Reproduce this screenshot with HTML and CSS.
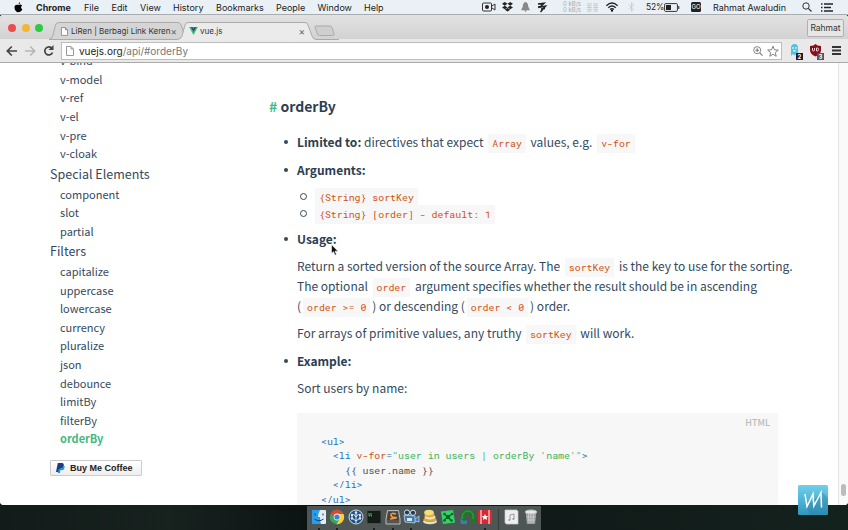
FILE: index.html
```
<!DOCTYPE html>
<html lang="en">
<head>
<meta charset="utf-8">
<title>vue.js</title>
<link rel="stylesheet" href="styles.css">
</head>
<body>
<div class="desktop">
  <header class="menubar">
    <svg class="apple" viewBox="0 0 10 12"><path d="M6.900 0Q7 1.800 5 2.600Q4.900.8 6.900 0M5 3.300Q7.700 2 9 4Q6.500 5.800 9.300 8Q7.600 12 5.300 10.900Q2.800 12 1.200 8.900Q-.7 3.600 3 3Q4 2.900 5 3.300"/></svg>
    <b class="m-chrome">Chrome</b><span class="m-file">File</span><span class="m-edit">Edit</span><span class="m-view">View</span><span class="m-history">History</span><span class="m-bookmarks">Bookmarks</span><span class="m-people">People</span><span class="m-window">Window</span><span class="m-help">Help</span>
    <div class="status">
      <svg class="cam" viewBox="0 0 14 10"><rect x=".5" y="1" width="9" height="8" rx="1" fill="none" stroke="#333"/><circle cx="5" cy="5" r="2" fill="#222"/><path d="M10 4l3-2v6l-3-2" fill="none" stroke="#333"/></svg>
      <svg class="drop" viewBox="0 0 12 11"><path d="M3 0l3 2-3 2-3-2zM9 0l3 2-3 2-3-2zM3 4l3 2-3 2-3-2zM9 4l3 2-3 2-3-2zM3 8.500l3-2 3 2-3 2z" fill="#222"/></svg>
      <svg class="bell" viewBox="0 0 10 11"><path d="M5 0q3 1 3 5l2 4H0l2-4q0-4 3-5M3.500 9.500h3L5 11" fill="#888"/></svg>
      <svg class="zz" viewBox="0 0 10 11"><path d="M1 2l6-.8-4 4 5.500-1-5 5.800M1 5l3-.5M4 7l4-.4" fill="none" stroke="#222" stroke-width="1.500"/></svg>
      <span class="net">0 kB/s<br>0 kB/s</span>
      <svg class="bars" viewBox="0 0 12 10"><path d="M0 1h5M0 3h5M0 5h5M0 7h5M0 9h5M7 1h5M7 3h5M7 5h5M7 7h5M7 9h5" stroke="#bfc4c8"/></svg>
      <svg class="wifi" viewBox="0 0 14 11"><path d="M.8 4Q7-1.800 13.200 4M2.900 6.200Q7 2.500 11.100 6.200M4.900 8.300Q7 6.500 9.100 8.300" fill="none" stroke="#222" stroke-width="1.500"/><circle cx="7" cy="9.600" r="1.200"/></svg>
      <svg class="bt" viewBox="0 0 8 11"><path d="M1 3l5.500 5L4 10.500V.5L6.500 3 1 8" fill="none" stroke="#c5cacd"/></svg>
      <span class="pct">52%</span>
      <svg class="batt" viewBox="0 0 16 9"><rect x=".6" y=".6" width="12.800" height="7.800" rx="1" fill="none" stroke="#333"/><path d="M2 2h5v5H2zM14.300 3h1v3h-1z" fill="#222"/></svg>
      <span class="go">GO</span>
      <span class="user">Rahmat Awaludin</span>
      <svg class="search" viewBox="0 0 10 10"><circle cx="4" cy="4" r="3.200" fill="none" stroke="#333"/><path d="M6.300 6.300L9.500 9.500" stroke="#333" stroke-width="1.200"/></svg>
      <svg class="list" viewBox="0 0 12 9"><path d="M0 1h1.500M0 4.500h1.500M0 8h1.500M3 1h9M3 4.500h7M3 8h9" stroke="#222" stroke-width="1.300"/></svg>
    </div>
  </header>
  <main class="window">
    <div class="tabstrip">
      <div class="lights"><i class="red"></i><i class="amber"></i><i class="green"></i></div>
      <svg class="tabshape" viewBox="0 0 290 18" aria-hidden="true">
        <path d="M0 17.500Q3 17 4 13L6.500 3Q7.200.5 10 .5H129Q131 .5 132 3L136 14" fill="#d5d5d5" stroke="#aaa"/>
        <path d="M0 17.500H128Q132 17.500 133 14L136 3Q136.800.5 139 .5H256Q258 .5 259 3L263 14Q264 17.500 267 17.500H290V18H0z" fill="#ebebeb"/>
        <path d="M0 17.500H128Q132 17.500 133 14L136 3Q136.800.5 139 .5H256Q258 .5 259 3L263 14Q264 17.500 267 17.500H290" fill="none" stroke="#aaa"/>
        <path d="M267 4h14q1.500 0 2 1.500l2 6q.6 2-1.500 2h-13q-1.500 0-2-1.500l-2.500-6.500q-.5-1.500 1-1.500z" fill="#cfcfcf" stroke="#aaa"/>
      </svg>
      <div class="tabs">
        <div class="tab one"><svg viewBox="0 0 8 10"><path d="M.5.5h4.500l2.500 2.500v6.500h-7zM5 .5V3h2.500" fill="#fff" stroke="#888"/></svg><span>LiRen | Berbagi Link Keren</span><em>×</em></div>
        <div class="tab two"><svg viewBox="0 0 10 9"><path d="M0 0h10L5 9z" fill="#41b883"/><path d="M2 0h1.800L5 2l1.200-2H8L5 5.400z" fill="#35495e"/></svg><span>vue.js</span><em>×</em></div>
      </div>
      <span class="profile">Rahmat</span>
    </div>
    <div class="toolbar">
      <svg class="nav" viewBox="0 0 52 12"><path d="M11 6H1.500M5.800 1.500L1.300 6l4.500 4.500" fill="none" stroke="#444" stroke-width="1.700"/><path d="M19 6h9.500M24.200 1.500L28.700 6l-4.500 4.500" fill="none" stroke="#b5b5b5" stroke-width="1.500"/><path d="M45.500 3A4 4 0 1 0 46.500 7.500" fill="none" stroke="#444" stroke-width="1.700"/><path d="M47.500 0v5h-5z" fill="#444"/></svg>
      <div class="address">
        <svg class="doc" viewBox="0 0 8 10"><path d="M.5.5h4.500l2.500 2.500v6.500h-7zM5 .5V3h2.500" fill="#fff" stroke="#999"/></svg>
        <span class="url"><b>vuejs.org</b>/api/#orderBy</span>
        <svg class="mag" viewBox="0 0 11 11"><circle cx="4.600" cy="4.600" r="3.900" fill="none" stroke="#777"/><path d="M2.600 4.600h4M4.600 2.600v4M7.500 7.500l3 3" stroke="#777" stroke-width="1.200"/></svg>
        <svg class="star" viewBox="0 0 13 12"><path d="M6.500.8l1.600 3.900 4.200.3L9 7.700l1 4-3.500-2.200L3 11.700l1-4L.7 5l4.200-.3z" fill="#fff" stroke="#777"/></svg>
      </div>
      <div class="ext ghost"><svg viewBox="0 0 12 13"><path d="M2 12V4q0-4 3.500-4T9 4v7l-2-1-1.500 1.500L4 10z" fill="#4fc3dc"/><path d="M4 3v2M7 3v2M4 6.800h3" stroke="#fff"/></svg><small>2</small></div>
      <div class="ext shield"><svg viewBox="0 0 12 13"><path d="M0 2q4 0 5.500-2Q7 2 11 2v4q0 4-5.500 6.500Q0 10 0 6z" fill="#8c0c18"/><path d="M2.500 4v2q0 1 1 1t1-1V4M6.500 4v3h.8q1.200 0 1.200-1.500T7.300 4z" fill="none" stroke="#fff" stroke-width=".8"/></svg><small>3</small></div>
      <svg class="burger" viewBox="0 0 9 9"><path d="M0 1h9M0 4.500h9M0 8h9" stroke="#333" stroke-width="2"/></svg>
    </div>
    <div class="page">
      <nav class="sidebar">
        <ul>
          <li>v-bind</li><li>v-model</li><li>v-ref</li><li>v-el</li><li>v-pre</li><li>v-cloak</li>
        </ul>
        <h4>Special Elements</h4>
        <ul><li>component</li><li>slot</li><li>partial</li></ul>
        <h4>Filters</h4>
        <ul><li>capitalize</li><li>uppercase</li><li>lowercase</li><li>currency</li><li>pluralize</li><li>json</li><li>debounce</li><li>limitBy</li><li>filterBy</li><li class="current">orderBy</li></ul>
        <div class="coffee"><svg viewBox="0 0 10 11"><path d="M2 0h4.500q3 .5 2 3.500T5 6.200L4 6.500 3.300 10H0z" fill="#1b3d80"/><path d="M8.800 2.500q1.500 1.500.3 3.800T5 7.800L4.400 11H2l1-4.500 2.500-.3Q8.500 5.500 8.800 2.500" fill="#179bd7"/></svg><span>Buy Me Coffee</span></div>
      </nav>
      <article class="content">
        <h3><a>#</a> orderBy</h3>
        <ul class="facts">
          <li><p><b>Limited to:</b> directives that expect <code>Array</code> values, e.g. <code>v-for</code></p></li>
          <li><p><b>Arguments:</b></p>
            <ul class="args"><li><code>{String} sortKey</code></li><li><code>{String} [order] - default: 1</code></li></ul>
          </li>
          <li><p><b>Usage:</b></p>
            <p>Return a sorted version of the source Array. The <code>sortKey</code> is the key to use for the sorting.<br>The optional <code>order</code> argument specifies whether the result should be in ascending<br>(<code>order &gt;= 0</code>) or descending (<code>order &lt; 0</code>) order.</p>
            <p>For arrays of primitive values, any truthy <code>sortKey</code> will work.</p>
          </li>
          <li><p><b>Example:</b></p>
            <p>Sort users by name:</p>
            <div class="sample"><span class="lang">HTML</span><pre><i>&lt;ul&gt;</i>
  <i>&lt;li <u>v-for</u>=<s>"user in users | orderBy 'name'"</s>&gt;</i>
    {{ user.name }}
  <i>&lt;/li&gt;</i>
<i>&lt;/ul&gt;</i></pre></div>
          </li>
        </ul>
      </article>
      <div class="scrollbar"><i></i></div>
    </div>
  </main>
  <svg class="pointer" viewBox="0 0 8 12"><path d="M.5.5v9l2-1.800 1.500 3.500 1.500-.7L4 7.200h3z" fill="#111" stroke="#fff" stroke-width=".6"/></svg>
  <svg class="watermark" viewBox="0 0 30 30"><defs><linearGradient id="sky" x2="0" y2="1"><stop stop-color="#6fd0ec"/><stop offset="1" stop-color="#2f97bd"/></linearGradient></defs><rect width="30" height="30" rx="1.500" fill="url(#sky)"/><path d="M24 7l6 6v17H12L8 22z" fill="#27789a" opacity=".35"/><path d="M7 9l2 12.500L15 9l.8 12L23 7.500l.5 15" fill="none" stroke="#fff" stroke-width="1.500"/></svg>
  <footer class="dock">
    <div class="app on"><svg viewBox="0 0 16 16"><rect x="1" y="1" width="14" height="14" rx="1" fill="#e1edf7"/><path d="M1 1h8q-2 4-2 7h2q0 4 1 7H1z" fill="#2a9cec"/><path d="M4 4.500v2M12 4.500v2M3.500 10q4.500 3.500 9 0" fill="none" stroke="#173c64"/></svg></div>
    <div class="app on"><svg viewBox="0 0 16 16"><circle cx="8" cy="8" r="7.200" fill="#36a852"/><path d="M1.800 4.400A7.200 7.200 0 0 1 14.500 5H8L5 9z" fill="#df4537"/><path d="M14.500 5A7.200 7.200 0 0 1 7.500 15.200L11 9.500 8 5z" fill="#f9cf35"/><circle cx="8" cy="8" r="3.400" fill="#eee"/><circle cx="8" cy="8" r="2.600" fill="#3d7fd8"/></svg></div>
    <div class="app"><svg viewBox="0 0 16 16"><circle cx="8" cy="8" r="7" fill="#1e4f87" stroke="#d6dde7"/><path d="M8 14V3M8 12L4 9V6M8 12l4-3V6M8 8L5.500 5M8 8l2.500-3" fill="none" stroke="#dbe9f5"/><g fill="#dbe9f5"><circle cx="8" cy="3.500" r="1.300"/><circle cx="4" cy="6" r="1.200"/><circle cx="12" cy="6" r="1.200"/><circle cx="4" cy="9.500" r="1.200"/><circle cx="12" cy="9.500" r="1.200"/></g></svg></div>
    <div class="app on"><svg viewBox="0 0 16 16"><rect x="1" y="1.500" width="14" height="13" rx="1" fill="#151c18" stroke="#47504b"/><path d="M3 4v3M5 4v3M3 7h1M5 7h1" stroke="#36c953"/></svg></div>
    <div class="app on"><svg viewBox="0 0 16 16"><path d="M2.500 1.500h11L15 10v5H1v-5z" fill="#555" stroke="#bbb"/><path d="M3.500 3h9l1 8h-11z" fill="#414141"/><path d="M11 5Q6 3.500 6 6t4 2.500T5 10" fill="none" stroke="#f29a3a" stroke-width="1.700"/></svg></div>
    <div class="app on"><svg viewBox="0 0 16 16"><path d="M1 6l11 1v7l-10-1zM12 10l4-3v6l-4-1" fill="#3e79b4" stroke="#c0d3e3" stroke-width=".8"/><circle cx="4" cy="3.500" r="2.600" fill="#263b50" stroke="#d7e2ec"/><circle cx="10" cy="3.800" r="2.600" fill="#263b50" stroke="#d7e2ec"/><path d="M4 9h5v3H4z" fill="#d7e7f2"/></svg></div>
    <div class="app"><svg viewBox="0 0 16 16"><ellipse cx="8" cy="12.500" rx="7" ry="2.800" fill="#e5e2d5"/><ellipse cx="8" cy="10.500" rx="6.500" ry="2.800" fill="#d7a733"/><ellipse cx="8" cy="8" rx="5.500" ry="2.500" fill="#ece7cd"/><ellipse cx="7.500" cy="6" rx="5" ry="2.400" fill="#deb03b"/><ellipse cx="7" cy="3.500" rx="4.800" ry="2.800" fill="#f4dc7c"/></svg></div>
    <div class="app"><svg viewBox="0 0 16 16"><path d="M1 2.500L13 1l2 12.500L3 15z" fill="#34d464"/><path d="M8 8L4 5M8 8l4-3M8 8l3.500 4M8 8l-4 3" stroke="#0d622e" stroke-width="1.300"/><g fill="#0d622e"><circle cx="8" cy="8" r="2.200"/><circle cx="4.500" cy="5" r="1.300"/><circle cx="12" cy="5" r="1.300"/><circle cx="11.500" cy="11.500" r="1.300"/><circle cx="4.500" cy="11.500" r="1.300"/></g></svg></div>
    <div class="app"><svg viewBox="0 0 16 16"><path d="M4 13V8q0-6 5-6t5 6v6" fill="none" stroke="#197d26" stroke-width="4"/><path d="M3 10q0-8 6-8t5 8" fill="none" stroke="#3ba53e" stroke-width="1"/><path d="M1 10l4 2 3-1v4H2z" fill="#3782aa"/></svg></div>
    <div class="app on"><svg viewBox="0 0 16 16"><rect x="1" y="1" width="14" height="14" rx="1.500" fill="#d92831"/><path d="M4 1v14M12 1v14" stroke="#fff"/><path d="M8 5l1 2 2.200.2-1.600 1.500.4 2.200-2-1.100-2 1.100.4-2.200-1.600-1.500L7 7z" fill="#fff"/></svg></div>
    <span class="divider"></span>
    <div class="app"><svg viewBox="0 0 16 16"><path d="M1 1h12v1h1v13H2v-1H1z" fill="#eee" stroke="#ccc" stroke-width=".7"/><path d="M6 11V6l4-1v5" fill="none" stroke="#999"/><circle cx="5.300" cy="11" r="1" fill="#999"/><circle cx="9.300" cy="10" r="1" fill="#999"/></svg></div>
    <div class="app"><svg viewBox="0 0 16 16"><path d="M2.500 2.500h11L12 15H4z" fill="#9da1a2"/><ellipse cx="8" cy="3" rx="5.800" ry="2" fill="#e8e8e8" stroke="#bbb"/><path d="M5.500 5l.5 9M8 5v9M10.500 5l-.5 9M3.500 8h9M4 11h8" stroke="#ddd" stroke-width=".6"/></svg></div>
  </footer>
</div>
</body>
</html>
```
FILE: styles.css
```
* { box-sizing: border-box; }
body { margin: 0; overflow: hidden; }
svg { display: block; flex: none; overflow: visible; }
.desktop { position: relative; width: 848px; height: 530px; background: linear-gradient(90deg, #121b19, #17211e 20%, #0c1413 36%, #111b19 70%, #14221e); overflow: hidden; font-family: "Inter", "Liberation Sans", sans-serif; }

.menubar { height: 15px; display: flex; align-items: center; background: #eaf1f6; border-bottom: 1px solid #a9acae; font-size: 9px; color: #222; white-space: nowrap; }
.menubar span, .menubar b { flex: none; }
.apple { width: 9px; height: 11px; margin-left: 14px; margin-right: 13px; }
.m-chrome { width: 48px; }
.m-file { width: 27.500px; }
.m-edit { width: 28.500px; }
.m-view { width: 33px; }
.m-history { width: 43px; }
.m-bookmarks { width: 60px; }
.m-people { width: 41.500px; }
.m-window { width: 46.500px; }
.status { flex: 1; display: flex; align-items: center; height: 14px; }
.m-help { width: 118px; }
.cam { width: 14px; height: 10px; margin-right: 6px; }
.drop { width: 11px; height: 10px; margin-right: 8px; }
.bell { width: 9px; height: 10px; margin-right: 7px; }
.zz { width: 10px; height: 11px; margin-right: 16px; }
.net { width: 24px; font-size: 6px; line-height: 6px; color: #a5abb0; }
.bars { width: 11px; height: 9px; margin-right: 7px; }
.wifi { width: 14px; height: 10px; margin-right: 9px; }
.bt { width: 7px; height: 10px; margin-right: 11px; }
.pct { width: 18px; font-size: 8.500px; letter-spacing: -.2px; }
.batt { width: 16px; height: 9px; margin-right: 11px; }
.go { width: 10px; height: 10px; border-radius: 1.500px; background: #222; color: #fff; font-size: 6px; line-height: 10px; text-align: center; margin-right: 12px; }
.user { width: 89px; }
.search { width: 10px; height: 10px; margin-right: 9px; }
.list { width: 12px; height: 9px; }

.window { height: 490px; border-radius: 3px 3px 4px 4px; overflow: hidden; background: #fff; }
.tabstrip { position: relative; display: flex; height: 24px; background: linear-gradient(#e2e2e2, #d2d2d2); }
.lights { display: flex; gap: 5.500px; padding: 9px 0 0 8px; width: 49px; }
.lights i { width: 8px; height: 8px; border-radius: 50%; }
.red { background: #ed4c4e; }
.amber { background: #f5b52f; }
.green { background: #2ecb41; }
.tabshape { width: 290px; height: 18px; margin-top: 7px; }
.tabs { display: flex; position: absolute; left: 61px; top: 9px; font-size: 8px; color: #333; }
.tab { display: flex; align-items: center; height: 14px; white-space: nowrap; }
.tab svg { width: 7px; height: 9px; margin-right: 3px; }
.tab span { flex: 1; }
.tab em { font-style: normal; font-size: 10px; color: #666; }
.one { width: 114px; margin-right: 14px; }
.two { width: 116px; }
.two svg { width: 9px; height: 8px; margin-right: 2px; }
.profile { width: 37px; height: 18px; margin: 4px 4px 0 auto; border: 1px solid #b0b0b0; border-radius: 2px; background: #e6e6e6; font: 8.500px/16px Inter, sans-serif; text-align: center; color: #333; }
.toolbar { height: 24px; display: flex; align-items: center; background: #e9e9e9; border-bottom: 1px solid #aaa; padding-left: 6px; }
.nav { width: 52px; height: 12px; margin-right: 3px; }
.address { width: 251px; height: 18px; flex: none; width: 721px; display: flex; align-items: center; background: #fff; border: 1px solid #bdbdbd; width: 721px; }
.address { margin-left: 0; }
.doc { width: 8px; height: 10px; margin: 0 5px 0 4px; }
.url { font: 10px "Inter", sans-serif; color: #777; flex: 1; }
.url b { font-weight: 400; color: #222; }
.mag { width: 10px; height: 10px; margin-right: 4px; }
.star { width: 12px; height: 12px; margin-right: 2px; }
.address { flex: 0 1 251px; flex-basis: 251px; }
.address { flex: none; width: 251px; width: 251px; min-width: 251px; min-width: 721px; max-width: 721px; }
.ext { position: relative; width: 12px; height: 14px; margin-left: 7px; }
.shield { margin-left: 9px; }
.ext svg { width: 12px; height: 13px; }
.ext small { position: absolute; right: -2px; bottom: -2px; width: 7px; height: 7px; background: #261437; color: #fff; font: bold 6px/7px Inter, sans-serif; text-align: center; }
.shield small { background: #555; }
.burger { width: 9px; height: 9px; margin-left: 10px; }

.page { display: flex; height: 442px; background: #fff; overflow: hidden; font-family: "Noto Sans CJK SC", "Noto Sans", sans-serif; color: #34495e; }
.page ul { list-style: none; margin: 0; padding: 0; }
.page p { margin: 0; }
.sidebar { flex: none; width: 220px; padding-left: 50px; margin-top: -11.700px; }
.sidebar ul { padding-left: 10px; }
.sidebar li { height: 18.550px; font-size: 11px; line-height: 18.550px; }
.sidebar h4 { margin: 0; height: 22px; font-size: 12.500px; line-height: 22px; font-weight: 400; }
.sidebar .current { color: #42b983; font-weight: 700; }
.coffee { display: flex; align-items: center; width: 92px; height: 16px; margin-top: 12px; border: 1px solid #ccc; border-radius: 1px; background: linear-gradient(#fff, #eee); font: bold 9px "Liberation Sans", sans-serif; color: #222; white-space: nowrap; }
.coffee svg { width: 9px; height: 10px; margin: 0 5px; }

.content { flex: none; width: 558px; padding: 33px 0 0 49px; }
.content h3 { margin: 0 0 16px; font-size: 14px; line-height: 20px; color: #2c3e50; }
.content h3 a { color: #42b983; }
.facts { font-size: 12px; }
.content .facts { padding-left: 28px; }
.facts > li { position: relative; margin-bottom: 7.500px; }
.facts > li::before { content: ""; position: absolute; left: -13px; top: 8px; width: 4px; height: 4px; border-radius: 50%; background: #34495e; }
.facts p { line-height: 20px; white-space: nowrap; }
.facts p + p { margin-top: 7.200px; }
.facts b { color: #2c3e50; }
code, pre { font-family: "Roboto Mono", "DejaVu Sans Mono", monospace; font-size: 9.900px; }
code { line-height: 1; padding: 3px 4px; margin: 0 2px; background: #f7f7f7; color: #d05412; white-space: nowrap; }
.content .args { padding: 7.300px 0 0 16px; }
.args li { position: relative; height: 17.300px; line-height: 17.300px; }
.args li::before { content: ""; position: absolute; left: -13px; top: 6px; width: 5px; height: 5px; border: 1px solid #34495e; border-radius: 50%; }
.sample { position: relative; height: 120px; margin-top: 15px; padding: 22px 24px; background: #f7f7f7; }
.lang { position: absolute; right: 8px; top: 3px; font-size: 9px; line-height: 14px; font-weight: 500; color: #bbb; }
pre { margin: 0; line-height: 14.500px; color: #525252; }
pre i { font-style: normal; color: #2973b7; }
pre u { text-decoration: none; color: #d05412; }
pre s { text-decoration: none; color: #42b35b; }
.scrollbar { width: 10px; margin-left: auto; border-left: 1px solid #e5e5e5; background: #fafafa; }
.scrollbar i { display: block; width: 5px; height: 12px; margin: 421px 0 0 2px; border-radius: 3px; background: #bcbcbc; }

.pointer { position: absolute; left: 331px; top: 244px; width: 8px; height: 12px; }
.watermark { position: absolute; left: 798px; top: 485px; width: 30px; height: 30px; }
.dock { position: absolute; left: 307px; top: 506px; width: 234px; height: 24px; display: flex; padding: 3px 0 0 2.500px; background: #4d5655; }
.app { position: relative; width: 18.550px; flex: none; padding-left: 1px; }
.app svg { width: 16px; height: 16px; }
.on::after { content: ""; position: absolute; left: 8px; bottom: 0; width: 2px; height: 2px; border-radius: 50%; background: #111; }
.divider { width: 1px; margin: 0 4px 0 3px; background: #343e3c; }
```
